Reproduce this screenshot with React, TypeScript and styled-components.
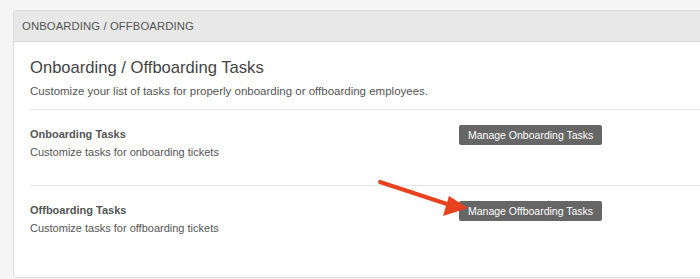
import React from "react";
import styled, { createGlobalStyle } from "styled-components";

const Global = createGlobalStyle`
  html, body { margin: 0; padding: 0; background: #f5f5f5; overflow: hidden; }
  body { font-family: "Liberation Sans", Arial, Helvetica, sans-serif; }
`;

const Page = styled.div`
  position: relative;
  width: 700px;
  height: 279px;
  padding: 10px 0 0 13px;
  box-sizing: border-box;
  overflow: hidden;
`;

const Card = styled.section`
  width: 760px;
  background: #fff;
  border: 1px solid #dcdcdc;
  border-radius: 3px;
  overflow: hidden;
  box-sizing: border-box;
`;

const CardHeader = styled.header`
  height: 30px;
  display: flex;
  align-items: center;
  padding: 0 8px;
  background: #e8e8e8;
  border-bottom: 1px solid #d9d9d9;
  color: #555;
  font-size: 11.3px;
  letter-spacing: 0.1px;
`;

const CardBody = styled.div`
  padding: 14px 0 0 16px;
  height: 235px;
  box-sizing: border-box;
`;

const Title = styled.h2`
  margin: 0;
  font-size: 16.6px;
  font-weight: 400;
  line-height: 24px;
  color: #444;
`;

const Lead = styled.p`
  margin: 4px 0 0;
  font-size: 11.5px;
  line-height: 14px;
  color: #555;
  padding-bottom: 11px;
`;

const Row = styled.div`
  display: grid;
  grid-template-columns: 429px auto;
  align-items: start;
  border-top: 1px solid #e6e6e6;
  padding-top: 15px;
  height: 76px;
  box-sizing: border-box;
`;

const RowText = styled.div`
  padding-top: 2px;
`;

const RowTitle = styled.div`
  font-size: 11px;
  font-weight: 700;
  line-height: 15px;
  color: #555;
`;

const RowDesc = styled.div`
  font-size: 11px;
  line-height: 15px;
  margin-top: 3px;
  color: #555;
`;

const Button = styled.button`
  justify-self: start;
  height: 20px;
  padding: 0 9px;
  border: none;
  border-radius: 2px;
  background: #666;
  color: #fff;
  font-family: inherit;
  font-size: 10.5px;
  line-height: 20px;
  white-space: nowrap;
  cursor: pointer;
`;

const Arrow = styled.svg`
  position: absolute;
  left: 0;
  top: 0;
  pointer-events: none;
`;

export default function App() {
  return (
    <>
      <Global />
      <Page>
        <Card>
          <CardHeader>ONBOARDING / OFFBOARDING</CardHeader>
          <CardBody>
            <Title>Onboarding / Offboarding Tasks</Title>
            <Lead>Customize your list of tasks for properly onboarding or offboarding employees.</Lead>
            <Row>
              <RowText>
                <RowTitle>Onboarding Tasks</RowTitle>
                <RowDesc>Customize tasks for onboarding tickets</RowDesc>
              </RowText>
              <Button>Manage Onboarding Tasks</Button>
            </Row>
            <Row>
              <RowText>
                <RowTitle>Offboarding Tasks</RowTitle>
                <RowDesc>Customize tasks for offboarding tickets</RowDesc>
              </RowText>
              <Button>Manage Offboarding Tasks</Button>
            </Row>
          </CardBody>
        </Card>
        <Arrow width="700" height="279" viewBox="0 0 700 279">
          <line x1="380" y1="182" x2="450" y2="205" stroke="#e8411e" strokeWidth="4" strokeLinecap="round" />
          <polygon points="468,208 449,196 443,216" fill="#e8411e" />
        </Arrow>
      </Page>
    </>
  );
}
